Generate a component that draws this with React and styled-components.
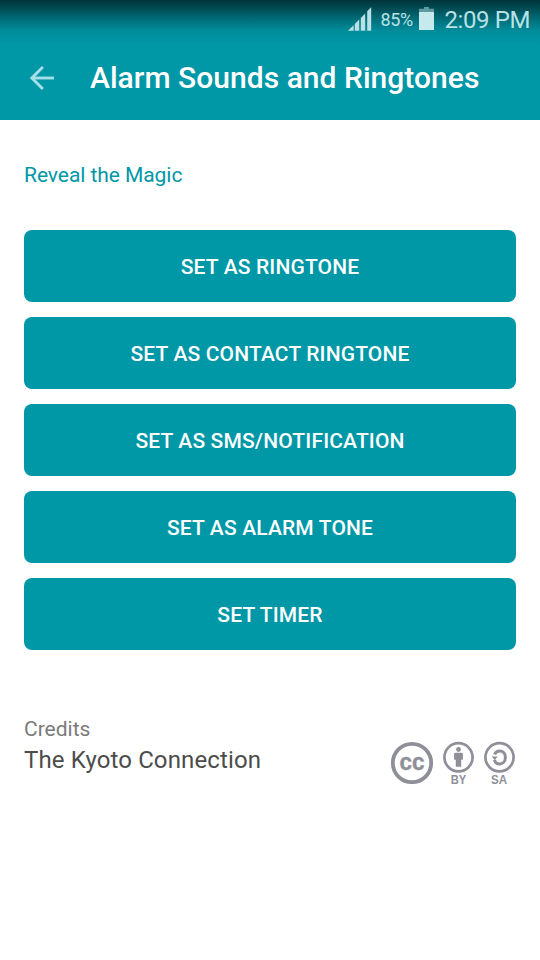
import React from "react";
import styled, { createGlobalStyle } from "styled-components";

const teal = "#0097a7";
const statusText = "#b9e1e6";
const badgeGrey = "#8f8f99";

const actions = [
	"Set as ringtone",
	"Set as contact ringtone",
	"Set as SMS/notification",
	"Set as alarm tone",
	"Set timer"
];

export default function App() {
	return (
		<Screen>
			<GlobalStyle />

			<Header>
				<StatusBar>
					<SignalIcon />
					<Percent>85%</Percent>
					<BatteryIcon />
					<Clock>2:09 PM</Clock>
				</StatusBar>

				<TitleBar>
					<BackButton aria-label="Back">
						<ArrowIcon />
					</BackButton>
					<Title>Alarm Sounds and Ringtones</Title>
				</TitleBar>
			</Header>

			<Content>
				<TrackName>Reveal the Magic</TrackName>

				<ButtonList>
					{actions.map(action => (
						<ActionButton key={ action }>{ action }</ActionButton>
					))}
				</ButtonList>

				<Credits>
					<div>
						<CreditsLabel>Credits</CreditsLabel>
						<Artist>The Kyoto Connection</Artist>
					</div>

					<License />
				</Credits>
			</Content>
		</Screen>
	);
}

const SignalIcon = () => (
	<svg width="24" height="24" viewBox="0 0 24 24" fill={ statusText }>
		<path d="M0 23.8 5.6 18.2V23.8Z" />
		<path d="M6.8 17 11.2 12.6V23.8H6.8Z" />
		<path d="M12.8 11 17.2 6.6V23.8H12.8Z" />
		<path d="M19.2 4.3 23.2 0.3V23.8H19.2Z" />
	</svg>
);

const BatteryIcon = () => (
	<svg width="16" height="24" viewBox="0 0 16 24">
		<path d="M5 -0.5H10V1.7H15V5H0V1.7H5Z" fill="#5d9ba0" />
		<path d="M0 5H15V23H0Z" fill="#c5e9ec" />
	</svg>
);

const ArrowIcon = () => (
	<svg width="26" height="26" viewBox="0 0 26 26" fill="none" stroke="#a4e0e8" strokeWidth="2.9">
		<path d="M25 13H3" />
		<path d="M13.9 2 2.9 13 13.9 24" />
	</svg>
);

/* Creative Commons attribution / share alike badges */
const License = () => (
	<Badges width="126" height="46" viewBox="0 0 126 46" fill={ badgeGrey }>
		<g fill="none" stroke={ badgeGrey }>
			<circle cx="22" cy="22" r="19.2" strokeWidth="3.8" />
			<circle cx="68.5" cy="16.3" r="14.1" strokeWidth="2.7" />
			<circle cx="109.5" cy="16.3" r="14.1" strokeWidth="2.7" />
			<path d="M104.6 13.5C105.5 10.9 107.2 9.9 109.5 9.9C113.2 9.9 115.4 12.7 115.4 16.4C115.4 20.2 112.9 22.9 109.5 22.9C106.9 22.9 105 21.5 104.4 18.9" strokeWidth="3" />
		</g>
		<text x="22" y="28.5" fontSize="24" textLength="25" lengthAdjust="spacingAndGlyphs" stroke={ badgeGrey } strokeWidth="0.4">cc</text>
		<circle cx="68.5" cy="8.5" r="2.4" />
		<path d="M65.2 11.7H71.8Q72.9 11.7 72.9 12.8V18.8H71.2V25.8H65.8V18.8H64.1V12.8Q64.1 11.7 65.2 11.7Z" />
		<path d="M101.6 15.6H107.8L104.7 18.9Z" />
		<text x="68.5" y="43" fontSize="12" textLength="15.5" lengthAdjust="spacingAndGlyphs">BY</text>
		<text x="109" y="43" fontSize="12" textLength="16" lengthAdjust="spacingAndGlyphs">SA</text>
	</Badges>
);

const GlobalStyle = createGlobalStyle`
	* {
		box-sizing: border-box;
	}

	body {
		margin: 0;
		background-color: #ffffff;
		font-family: Roboto, sans-serif;
	}
`

const Screen = styled.div`
	min-height: 960px;
`

const Header = styled.header`
	height: 120px;
	background: linear-gradient(#00343a 0, #00444b 6px, #006d78 19px, #008d9b 31px, ${ teal } 44px);
`

const StatusBar = styled.div`
	display: flex;
	justify-content: flex-end;
	height: 38px;
	padding: 7px 10px 0 0;
	color: ${ statusText };
`

const Percent = styled.span`
	width: 34px;
	margin: 2px 5px 0 8px;
	font-size: 18px;
	line-height: 22px;
	letter-spacing: -0.4px;
`

const Clock = styled.span`
	margin-left: 9px;
	font-size: 24px;
	line-height: 26px;
	letter-spacing: -0.4px;
`

const TitleBar = styled.div`
	display: flex;
	align-items: center;
	height: 80px;
	padding-left: 29px;
`

const BackButton = styled.button`
	display: flex;
	padding: 0;
	border: none;
	background: none;
`

const Title = styled.h1`
	margin: 0 0 1px 35px;
	font-size: 30px;
	font-weight: 500;
	letter-spacing: 0.03px;
	color: #ffffff;
	white-space: nowrap;
`

const Content = styled.main`
	padding: 42px 24px 0;
`

const TrackName = styled.div`
	font-size: 21px;
	line-height: 26px;
	letter-spacing: -0.06px;
	color: ${ teal };
`

const ButtonList = styled.div`
	display: grid;
	gap: 15px;
	margin-top: 42px;
`

const ActionButton = styled.button`
	height: 72px;
	padding: 2px 0 0;
	border: none;
	border-radius: 8px;
	background-color: ${ teal };
	font-family: inherit;
	font-size: 21px;
	font-weight: 500;
	letter-spacing: 0.15px;
	color: #ffffff;
	text-transform: uppercase;
`

const Credits = styled.footer`
	display: flex;
	justify-content: space-between;
	margin-top: 66px;
`

const CreditsLabel = styled.div`
	font-size: 21px;
	line-height: 26px;
	color: #7b7b7b;
`

const Artist = styled.div`
	margin-top: 3px;
	font-size: 24px;
	line-height: 30px;
	letter-spacing: 0.12px;
	color: #4c4c4c;
`

const Badges = styled.svg`
	margin-top: 25px;

	text {
		font-family: "Liberation Sans", Arial, sans-serif;
		font-weight: bold;
		text-anchor: middle;
	}
`
